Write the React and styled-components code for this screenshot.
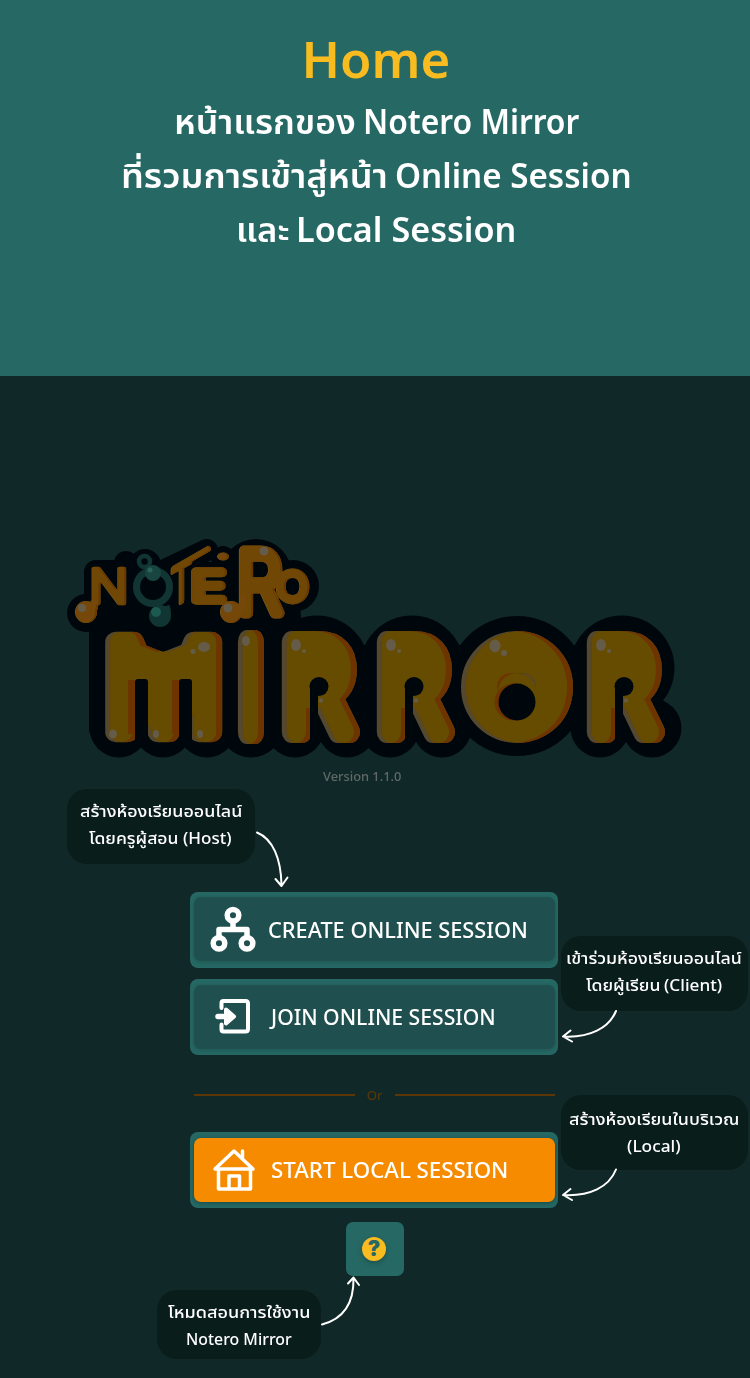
import React, { useLayoutEffect, useRef, useState } from "react";
import styled, { createGlobalStyle } from "styled-components";

const GlobalStyle = createGlobalStyle`
  * { box-sizing: border-box; }
  body {
    margin: 0;
    background: #102928;
    font-family: "Noto Sans", "Noto Sans Thai", sans-serif;
  }
`;

const Page = styled.main`
  width: 750px;
  height: 1378px;
  overflow: hidden;
  display: flex;
  flex-direction: column;
`;

const Hero = styled.header`
  height: 376px;
  flex: none;
  background: #266864;
  display: flex;
  flex-direction: column;
  align-items: center;
  padding: 24px 0 0 2px;
  color: #fff;
`;

const Title = styled.h1`
  margin: 0;
  font-size: 51px;
  line-height: 68px;
  height: 70px;
  font-weight: 600;
  color: #f9bc20;
`;

const Lead = styled.p`
  margin: 0;
  font-size: 34px;
  line-height: 54px;
  font-weight: 600;
`;

const TextLine = styled.span`
  display: flex;
  justify-content: center;
  gap: ${(p) => p.$gap || 0}px;
`;

const FitBox = styled.span`
  display: block;
  flex: none;
  width: ${(p) => p.$width}px;
  white-space: nowrap;
  text-align: left;
`;

const FitInner = styled.span`
  display: inline-block;
  transform-origin: 0 50%;
`;

/* Scales a run of text horizontally so that it fills its column. */
function Fit({ width, children }) {
  const ref = useRef(null);
  const [scale, setScale] = useState(1);
  useLayoutEffect(() => {
    const natural = ref.current.offsetWidth;
    if (natural) setScale(width / natural);
  }, [width, children]);
  return (
    <FitBox $width={width}>
      <FitInner ref={ref} style={{ transform: `scaleX(${scale})` }}>
        {children}
      </FitInner>
    </FitBox>
  );
}

const Stage = styled.section`
  position: relative;
  flex: 1;
  padding-top: 154px;
  background: #102928;
`;

const LogoArt = styled.svg`
  display: block;
  width: 640px;
  height: 235px;
  margin-left: 55px;
`;

const Version = styled.div`
  display: flex;
  margin-left: 323px;
  font-size: 13px;
  line-height: 22px;
  height: 20px;
  font-weight: 500;
  color: #606968;
`;

const Menu = styled.nav`
  width: 368px;
  margin: 107px 0 0 190px;
  display: flex;
  flex-direction: column;
`;

const MenuButton = styled.button`
  height: 76px;
  margin: 0 0 ${(p) => p.$after || 0}px;
  padding: ${(p) => p.$top || 6}px 3px 6px 4px;
  border: 0;
  border-radius: 8px;
  background: #266864;
  color: #fff;
  font: inherit;
  font-size: 22px;
  line-height: 30px;
  font-weight: 500;
  display: flex;
  align-items: flex-start;
`;

const Face = styled.span`
  flex: 1;
  height: 64px;
  display: flex;
  align-items: center;
  border-radius: 7px;
  padding: 0 0 ${(p) => p.$lift || 1}px 15px;
  background: ${(p) => (p.$primary ? "#f78b00" : "#1f4f4f")};
  box-shadow: 0 1px 4px ${(p) => (p.$primary ? "#174a48" : "#1f5552")};
`;

const IconSlot = styled.svg`
  width: 50px;
  height: 50px;
  margin-right: ${(p) => p.$gap}px;
  flex: none;
`;

const Divider = styled.div`
  display: flex;
  align-items: center;
  height: 22px;
  margin: 0 3px 26px 4px;
  font-size: 13px;
  line-height: 20px;
  color: #5c3705;
`;

const Rule = styled.span`
  flex: 1;
  height: 2px;
  background: #5c3705;
`;

const OrLabel = styled.span`
  width: 40px;
  display: flex;
  justify-content: center;
`;

const HelpButton = styled.button`
  width: 58px;
  height: 54px;
  margin: 14px 0 0 155.5px;
  padding: 0 1px 0 0;
  border: 0;
  border-radius: 7px;
  background: #266864;
  display: grid;
  place-items: center;
`;

const HelpDot = styled.span`
  width: 24px;
  height: 24px;
  border-radius: 50%;
  background: #f9bc20;
  color: #266864;
  font: 900 21px/24px Inter, sans-serif;
  text-align: center;
  box-shadow: 0 2px 4px #1c504d;
`;

const Callout = styled.aside`
  position: absolute;
  left: ${(p) => p.$x}px;
  top: ${(p) => p.$y}px;
  width: ${(p) => p.$w}px;
  height: ${(p) => p.$h}px;
  padding: ${(p) => p.$pad || 9}px 1px 0 0;
  border-radius: 20px;
  background: #091d1b;
  color: #fff;
  font-size: 16px;
  line-height: 27px;
  font-weight: 500;
`;

const Arrows = styled.svg`
  position: absolute;
  left: 0;
  top: 0;
  pointer-events: none;
`;

/* A letter stretched to an exact ink box. */
function Letter({ ch, x, w, top, h, stroke, color, weight = 400, skew = 0 }) {
  const [box, setBox] = useState({ l: 0, w: 70, t: 73, h: 73 });
  useLayoutEffect(() => {
    const c = document.createElement("canvas").getContext("2d");
    c.font = `${weight} 100px Inter`;
    const m = c.measureText(ch);
    setBox({
      l: -m.actualBoundingBoxLeft,
      w: m.actualBoundingBoxRight + m.actualBoundingBoxLeft,
      t: m.actualBoundingBoxAscent,
      h: m.actualBoundingBoxAscent + m.actualBoundingBoxDescent,
    });
  }, [ch, weight]);
  const sx = w / box.w;
  const sy = h / box.h;
  return (
    <text
      fontFamily="Inter"
      fontSize="100"
      fontWeight={weight}
      fill={color}
      stroke={color}
      strokeWidth={stroke}
      strokeLinejoin="round"
      vectorEffect="non-scaling-stroke"
      transform={`translate(${x - box.l * sx} ${top + box.t * sy}) skewY(${skew}) scale(${sx} ${sy})`}
    >
      {ch}
    </text>
  );
}

const BIG = [
  { ch: "M", x: 115, w: 97 },
  { ch: "I", x: 246, w: 10 },
  { ch: "R", x: 291, w: 60 },
  { ch: "R", x: 386, w: 60 },
  { ch: "O", x: 472, w: 90 },
  { ch: "R", x: 596, w: 60 },
];

const SMALL = [
  { ch: "N", x: 94, w: 30, top: 569, h: 34, weight: 300, stroke: 5 },
  { ch: "T", x: 172, w: 19, top: 570, h: 38, skew: -28, weight: 300, stroke: 4 },
  { ch: "E", x: 196, w: 26, top: 571, h: 30, weight: 300, stroke: 9 },
  { ch: "R", x: 243, w: 37, top: 551, h: 62, weight: 300, stroke: 10 },
  { ch: "O", x: 279, w: 27, top: 571, h: 30, weight: 300, stroke: 7 },
];

const R_LEFTS = [280, 375, 585];
const INK = "#00070c";
const GOLD = "#664c00";
const GLINT = "#655b49";

/* Inner light on the left edge and inner shade on the right edge. */
function Bevel({ id, light, shade, left, right }) {
  return (
    <filter id={id} x="-5%" y="-5%" width="110%" height="110%" colorInterpolationFilters="sRGB">
      <feOffset in="SourceAlpha" dx={left} dy="0" result="fromLeft" />
      <feOffset in="SourceAlpha" dx={-right} dy="0" result="fromRight" />
      <feFlood floodColor={light} />
      <feComposite in2="SourceAlpha" operator="in" result="lightFill" />
      <feFlood floodColor={shade} />
      <feComposite in2="fromLeft" operator="in" />
      <feComposite in2="SourceAlpha" operator="in" result="shadeFill" />
      <feComposite in="SourceGraphic" in2="fromLeft" operator="in" />
      <feComposite in2="fromRight" operator="in" result="core" />
      <feMerge>
        <feMergeNode in="lightFill" />
        <feMergeNode in="shadeFill" />
        <feMergeNode in="core" />
      </feMerge>
    </filter>
  );
}

function Logo() {
  return (
    <LogoArt viewBox="55 530 640 235" role="img" aria-label="Notero Mirror">
      <defs>
        <Bevel id="bevelBig" light="#54482e" shade="#6d3400" left={5} right={6} />
        <Bevel id="bevelSmall" light="#7b5a18" shade="#6a3900" left={1} right={2} />
      </defs>
      <g fill={INK}>
        <rect x="89" y="592" width="149" height="150" rx="14" />
        <rect x="84" y="560" width="58" height="60" rx="12" />
        <circle cx="86" cy="613" r="19" />
        <circle cx="145" cy="565" r="16" />
        <circle cx="126" cy="563" r="12" />
        <circle cx="223" cy="558" r="12" />
        <circle cx="256" cy="575" r="36" />
        <circle cx="293" cy="586" r="26" />
        <circle cx="277" cy="616" r="24" />
        <path d="M165 570L207 550" stroke={INK} strokeWidth="22" strokeLinecap="round" />
        <rect x="130" y="562" width="140" height="80" />
        <rect x="221" y="616" width="60" height="141" rx="28" />
        <circle cx="119" cy="728" r="29.500" />
        <circle cx="163" cy="728" r="29.500" />
        <circle cx="207" cy="728" r="29.500" />
        <circle cx="251" cy="728" r="29.500" />
        <rect x="110" y="645" width="530" height="83" />
        <circle cx="517" cy="686" r="70" />
        {R_LEFTS.map((x) => (
          <React.Fragment key={x}>
            <circle cx={x + 37} cy="668" r="52.500" />
            <circle cx={x + 15} cy="728" r="29.500" />
            <circle cx={x + 67} cy="728" r="29.500" />
          </React.Fragment>
        ))}
      </g>
      <g filter="url(#bevelBig)">
        {BIG.map((b, i) => (
          <Letter key={i} {...b} top={642} h={90} stroke={21} color={GOLD} />
        ))}
        <path d="M114 633L163 652L212 633V682H114Z" fill={GOLD} />
        <rect x="149" y="670" width="29" height="72" rx="13" fill={GOLD} />
        <circle cx="517" cy="687" r="35" fill="none" stroke={GOLD} strokeWidth="42" />
        {R_LEFTS.map((x) => (
          <ellipse key={x} cx={x + 38} cy="668" rx="26" ry="20" fill={GOLD} />
        ))}
      </g>
      <circle cx="517" cy="692" r="19" fill={GOLD} />
      <circle cx="513" cy="702" r="18.500" fill="#6d3400" />
      <circle cx="517" cy="702" r="18.500" fill={INK} />
      <g fill={INK}>
        <rect x="135" y="679" width="13" height="64" rx="3" />
        <rect x="179" y="679" width="13" height="64" rx="3" />
        {R_LEFTS.map((x) => (
          <React.Fragment key={x}>
            <circle cx={x + 39} cy="686.500" r="9.500" />
            <rect x={x + 30} y="687" width="8" height="58" />
          </React.Fragment>
        ))}
      </g>
      <g fill="#6d3400">
        <rect x="128" y="680" width="7" height="54" />
        <rect x="172" y="680" width="7" height="54" />
      </g>
      <g fill={GLINT}>
        <ellipse cx="204" cy="647" rx="6" ry="5" />
        <circle cx="193" cy="651.500" r="2.500" />
        <ellipse cx="113" cy="734" rx="4" ry="4.500" />
        <ellipse cx="156" cy="734" rx="3" ry="4" />
        <ellipse cx="200" cy="734" rx="3" ry="4" />
        <ellipse cx="246" cy="641" rx="4" ry="5" />
        <ellipse cx="495" cy="646" rx="5.500" ry="6.500" />
        <circle cx="504" cy="653" r="3" />
        {R_LEFTS.map((x) => (
          <React.Fragment key={x}>
            <ellipse cx={x + 16} cy="645" rx="5" ry="6" />
            <circle cx={x + 24} cy="651" r="2" />
            <circle cx={x + 41} cy="700.500" r="2.200" />
          </React.Fragment>
        ))}
      </g>
      <g filter="url(#bevelSmall)">
        {SMALL.map((b, i) => (
          <Letter key={i} {...b} color="#704704" />
        ))}
        <path d="M175 568L208 549" stroke="#704704" strokeWidth="6" strokeLinecap="round" />
        <circle cx="86" cy="612" r="11" fill="#75480a" />
        <circle cx="231" cy="612" r="11" fill="#75480a" />
        <ellipse cx="223" cy="556.500" rx="6" ry="4" fill="#75480a" />
        <path d="M92 612Q96 608 94 600M238 612Q244 606 243 596" stroke="#75480a" strokeWidth="7" fill="none" />
      </g>
      <g fill={GLINT}>
        <circle cx="82" cy="608" r="4" />
        <circle cx="228" cy="608" r="4.500" />
        <circle cx="264" cy="551" r="4.500" />
      </g>
      <g fill="none" stroke="#113532">
        <circle cx="153" cy="587" r="16.500" strokeWidth="7" />
        <circle cx="144.500" cy="561.500" r="5.500" strokeWidth="4.500" />
      </g>
      <circle cx="153" cy="573" r="8" fill="#194540" />
      <circle cx="150" cy="570" r="2.500" fill="#2b6358" />
      <path d="M166 606Q170 616 162 622" stroke="#113532" strokeWidth="7" fill="none" />
      <circle cx="160" cy="616" r="11" fill="#113532" />
      <circle cx="156" cy="612" r="5" fill="#1c5a50" />
    </LogoArt>
  );
}

function CreateIcon() {
  return (
    <IconSlot $gap={9} viewBox="0 0 50 50" fill="none" stroke="#fff">
      <circle cx="24" cy="11.200" r="5.800" strokeWidth="5.500" />
      <circle cx="10" cy="39.200" r="5.800" strokeWidth="5.500" />
      <circle cx="38" cy="39.200" r="5.800" strokeWidth="5.500" />
      <path d="M24 18v8M10 34v-8.500h28v8.500" strokeWidth="5.500" strokeLinejoin="round" />
    </IconSlot>
  );
}

function JoinIcon() {
  return (
    <IconSlot $gap={12} viewBox="9.500 0 50 50" fill="none" stroke="#fff" strokeLinejoin="round" strokeLinecap="round">
      <path d="M22 17V12Q22 10 24 10H46Q48.500 10 48.500 12.500V38Q48.500 40.500 46 40.500H24Q22 40.500 22 38.500V33.500" strokeWidth="4" />
      <path d="M18.500 25.500H28" strokeWidth="5.500" />
      <path d="M26.500 18.500L34.500 25.500L26.500 32.500Z" fill="#fff" strokeWidth="4" />
    </IconSlot>
  );
}

function HouseIcon() {
  return (
    <IconSlot $gap={12} viewBox="0 0 50 50" fill="none" stroke="#fff" strokeWidth="3.500" strokeLinejoin="round" strokeLinecap="round">
      <path d="M6 25L25 7L44 25Z" />
      <path d="M9.500 25V45H41.500V25M20 44.500V32H30.500V44.500" />
      <path d="M33.500 13.500V7" />
    </IconSlot>
  );
}

export default function App() {
  return (
    <>
      <GlobalStyle />
      <Page>
        <Hero>
          <Title><Fit width={149}>Home</Fit></Title>
          <Lead>
            <TextLine $gap={7}><Fit width={182}>หน้าแรกของ</Fit><Fit width={216}>Notero Mirror</Fit></TextLine>
            <TextLine $gap={7}><Fit width={267}>ที่รวมการเข้าสู่หน้า</Fit><Fit width={237}>Online Session</Fit></TextLine>
            <TextLine $gap={6}><Fit width={54}>และ</Fit><Fit width={220}>Local Session</Fit></TextLine>
          </Lead>
        </Hero>
        <Stage>
          <Logo />
          <Version><Fit width={78}>Version 1.1.0</Fit></Version>
          <Menu>
            <MenuButton $top={5} $after={11}>
              <Face><CreateIcon /><Fit width={260}>CREATE ONLINE SESSION</Fit></Face>
            </MenuButton>
            <MenuButton $after={29}>
              <Face $lift={3}><JoinIcon /><Fit width={225}>JOIN ONLINE SESSION</Fit></Face>
            </MenuButton>
            <Divider><Rule /><OrLabel><Fit width={16}>Or</Fit></OrLabel><Rule /></Divider>
            <MenuButton>
              <Face $primary $lift={2}><HouseIcon /><Fit width={237}>START LOCAL SESSION</Fit></Face>
            </MenuButton>
            <HelpButton><HelpDot>?</HelpDot></HelpButton>
          </Menu>
          <Callout $x={67} $y={413} $w={188} $h={75}>
            <TextLine><Fit width={162}>สร้างห้องเรียนออนไลน์</Fit></TextLine>
            <TextLine $gap={4}><Fit width={90}>โดยครูผู้สอน</Fit><Fit width={49}>(Host)</Fit></TextLine>
          </Callout>
          <Callout $x={561} $y={560} $w={187} $h={75}>
            <TextLine><Fit width={176}>เข้าร่วมห้องเรียนออนไลน์</Fit></TextLine>
            <TextLine $gap={4}><Fit width={74}>โดยผู้เรียน</Fit><Fit width={58}>(Client)</Fit></TextLine>
          </Callout>
          <Callout $x={561} $y={719} $w={187} $h={75} $pad={11}>
            <TextLine><Fit width={171}>สร้างห้องเรียนในบริเวณ</Fit></TextLine>
            <TextLine><Fit width={54}>(Local)</Fit></TextLine>
          </Callout>
          <Callout $x={157} $y={914} $w={164} $h={69}>
            <TextLine><Fit width={142}>โหมดสอนการใช้งาน</Fit></TextLine>
            <TextLine><Fit width={106}>Notero Mirror</Fit></TextLine>
          </Callout>
          <Arrows width="750" height="1002" viewBox="0 376 750 1002" fill="none" stroke="#fff" strokeWidth="2" strokeLinecap="round" strokeLinejoin="round">
            <path d="M257 832.500C273 839 281 859 281.500 885M275.500 879L281.500 886L287.500 877.500" />
            <path d="M616 1011C609 1028 590 1038 563 1036.500M570.500 1030.500L563 1036.500L572 1041.500" />
            <path d="M616 1169.500C609 1187 590 1196.500 563 1195M570.500 1189L563 1195L572 1200" />
            <path d="M322 1324.500C343 1319 354 1303 353.500 1278M348 1283.500L353.500 1277.500L359 1285" />
          </Arrows>
        </Stage>
      </Page>
    </>
  );
}
